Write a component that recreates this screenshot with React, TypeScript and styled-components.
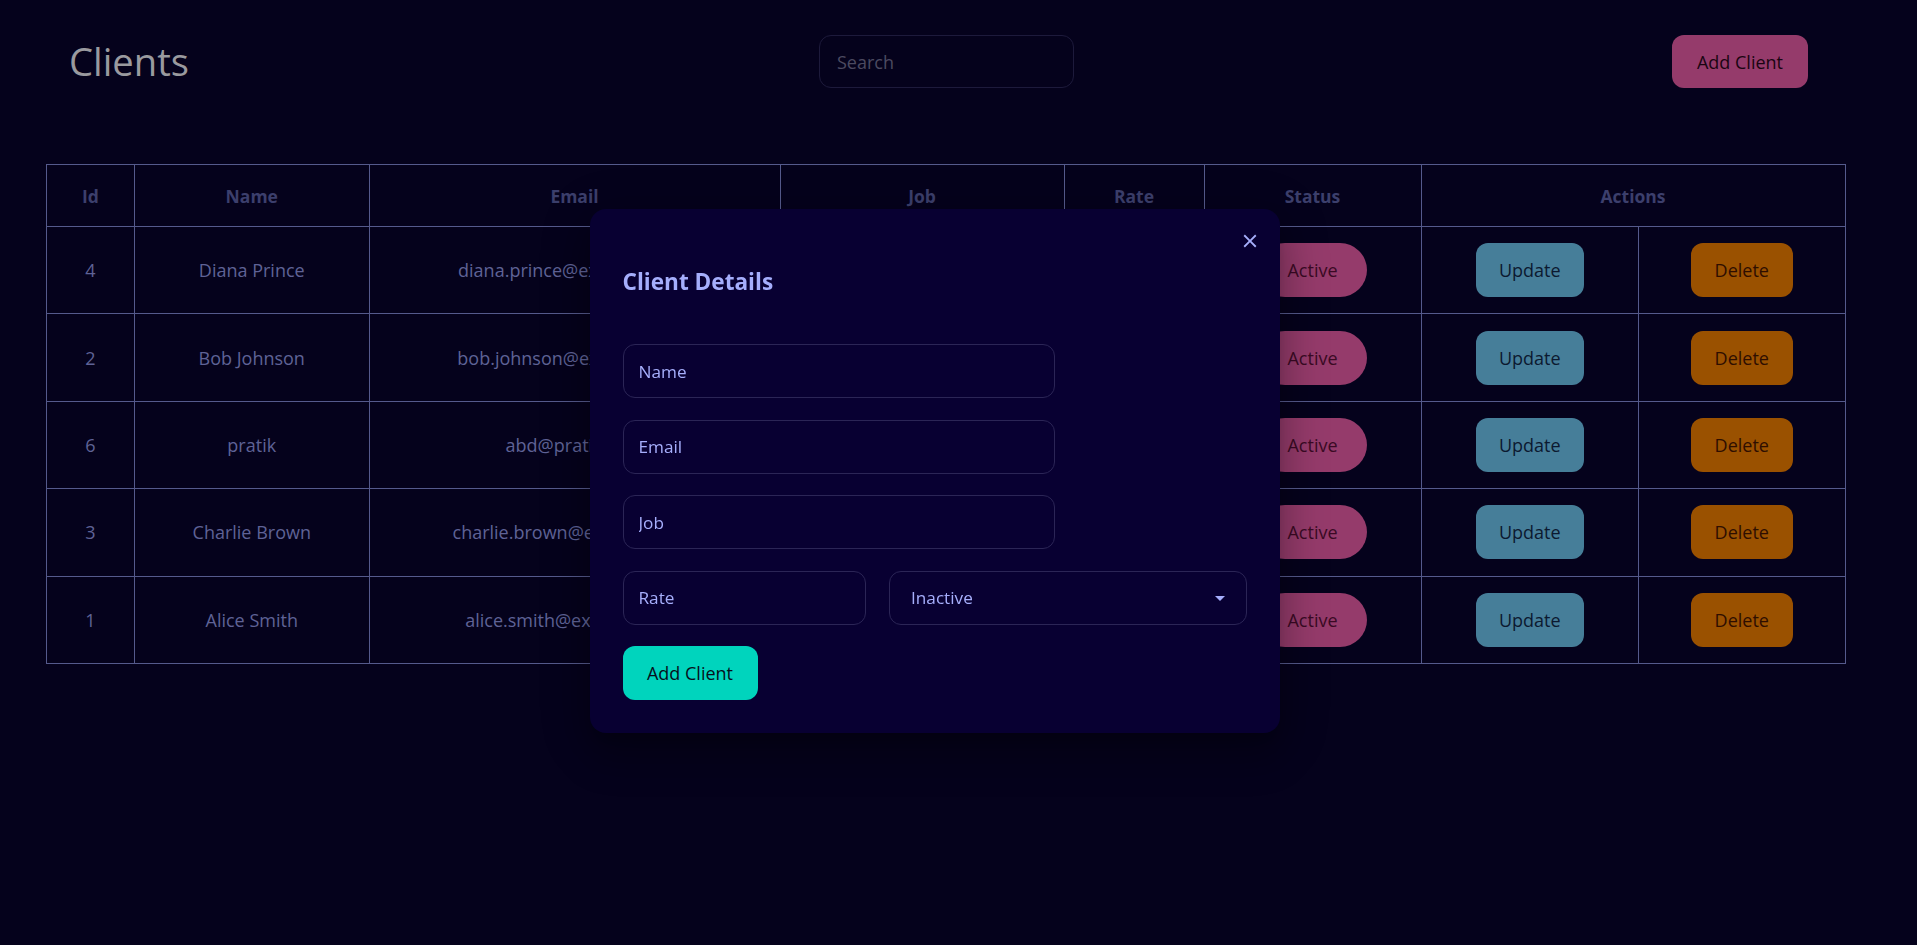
import React from "react";
import styled, { createGlobalStyle, css } from "styled-components";

const GlobalStyle = createGlobalStyle`
  html, body {
    margin: 0;
    padding: 0;
    background: #05021c;
  }
  body {
    font-family: "Open Sans", "Noto Sans", sans-serif;
    min-height: 100vh;
  }
  *, *::before, *::after {
    box-sizing: border-box;
  }
`;

const Page = styled.div`
  min-height: 100vh;
  background: #05021c;
`;

const Header = styled.header`
  display: grid;
  grid-template-columns: 750px 255px 1fr;
  align-items: center;
  padding: 35px 109px 0 69px;
`;

const Title = styled.h1`
  margin: 0;
  font-size: 38.2px;
  font-weight: 500;
  color: #9a9a9f;
  line-height: 53px;
`;

const Search = styled.input`
  height: 53px;
  width: 255px;
  border: 1px solid #1d1a3b;
  border-radius: 12px;
  background: transparent;
  padding: 0 17px;
  font-family: "Open Sans", sans-serif;
  font-size: 18px;
  color: #c0c0d0;
  outline: none;
  &::placeholder {
    color: #4c4a60;
  }
`;

const HeaderButton = styled.button`
  justify-self: end;
  width: 136px;
  height: 53px;
  border: none;
  border-radius: 12px;
  background: #953b6b;
  color: #1a0512;
  font-family: "Open Sans", sans-serif;
  font-size: 18px;
  cursor: pointer;
`;

const TableWrap = styled.div`
  padding: 76px 0 0 46px;
`;

const Table = styled.table`
  width: 1799px;
  border-collapse: collapse;
  table-layout: fixed;
`;

const Th = styled.th`
  height: 62px;
  border: 1px solid #555a8c;
  color: #3c3f6c;
  font-weight: 700;
  font-size: 17.5px;
  text-align: center;
  vertical-align: middle;
  padding: 0;
`;

const Td = styled.td`
  height: 87.4px;
  border: 1px solid #555a8c;
  color: #5f6296;
  font-size: 18px;
  text-align: center;
  vertical-align: middle;
  padding: 0;
`;

type Kind = "active" | "update" | "delete";

const kinds: Record<Kind, { bg: string; fg: string; w: number; r: number }> = {
  active: { bg: "#953b6b", fg: "#3a0a24", w: 109, r: 27 },
  update: { bg: "#467e99", fg: "#0c1930", w: 108, r: 12 },
  delete: { bg: "#9a5100", fg: "#2e0e00", w: 102, r: 12 },
};

const CellButton = styled.button<{ $kind: Kind }>`
  display: block;
  margin: 0 auto;
  height: 54px;
  border: none;
  font-family: "Open Sans", sans-serif;
  font-size: 18px;
  cursor: pointer;
  ${({ $kind }) => css`
    width: ${kinds[$kind].w}px;
    background: ${kinds[$kind].bg};
    color: ${kinds[$kind].fg};
    border-radius: ${kinds[$kind].r}px;
  `}
`;

const Backdrop = styled.div`
  position: fixed;
  inset: 0;
  display: flex;
  align-items: center;
  justify-content: center;
`;

const Dialog = styled.div`
  position: relative;
  width: 690px;
  margin: 0 48px 3px 0;
  padding: 33px;
  background: #080032;
  border-radius: 16px;
  box-shadow: 0 11px 15px -7px rgba(0, 0, 0, 0.25),
    0 24px 38px 3px rgba(0, 0, 0, 0.18), 0 9px 46px 8px rgba(0, 0, 0, 0.15);
`;

const CloseButton = styled.button`
  position: absolute;
  top: 12px;
  right: 10px;
  width: 40px;
  height: 40px;
  display: flex;
  align-items: center;
  justify-content: center;
  padding: 0;
  border: none;
  background: transparent;
  color: #a6aefc;
  cursor: pointer;
`;

const DialogTitle = styled.h2`
  margin: 24px 0 47px;
  font-size: 22.6px;
  line-height: 31px;
  font-weight: 700;
  color: #a5aefc;
`;

const Form = styled.div`
  display: flex;
  flex-direction: column;
  align-items: flex-start;
  gap: 21.5px;
`;

const fieldBase = css`
  height: 54px;
  border: 1px solid #2b2556;
  border-radius: 12px;
  background: transparent;
  color: #a6aefc;
  font-family: "Open Sans", sans-serif;
  font-size: 17.2px;
`;

const Field = styled.input<{ $w: number }>`
  ${fieldBase};
  width: ${({ $w }) => $w}px;
  padding: 0 15px;
  outline: none;
  &::placeholder {
    color: #a6aefc;
  }
`;

const FieldRow = styled.div`
  display: flex;
  gap: 23.5px;
  width: 100%;
`;

const SelectBox = styled.div`
  ${fieldBase};
  flex: 1;
  display: flex;
  align-items: center;
  justify-content: space-between;
  padding: 0 14px 0 21px;
  cursor: pointer;
`;

const SubmitButton = styled.button`
  width: 135px;
  height: 54px;
  border: none;
  border-radius: 12px;
  background: #00d4bd;
  color: #07101c;
  font-family: "Open Sans", sans-serif;
  font-size: 18px;
  cursor: pointer;
`;

const clients = [
  { id: 4, name: "Diana Prince", email: "diana.prince@example.com", job: "Designer", rate: 90 },
  { id: 2, name: "Bob Johnson", email: "bob.johnson@example.com", job: "Developer", rate: 100 },
  { id: 6, name: "pratik", email: "abd@pratik.com", job: "Engineer", rate: 50 },
  { id: 3, name: "Charlie Brown", email: "charlie.brown@example.com", job: "Manager", rate: 80 },
  { id: 1, name: "Alice Smith", email: "alice.smith@example.com", job: "Analyst", rate: 70 },
];

const colWidths = [88, 234.5, 411, 284, 140, 217, 217.5, 206.5];

export default function App() {
  return (
    <Page>
      <GlobalStyle />
      <Header>
        <Title>Clients</Title>
        <Search placeholder="Search" />
        <HeaderButton>Add Client</HeaderButton>
      </Header>
      <TableWrap>
        <Table>
          <colgroup>
            {colWidths.map((w, i) => (
              <col key={i} style={{ width: w }} />
            ))}
          </colgroup>
          <thead>
            <tr>
              <Th>Id</Th>
              <Th>Name</Th>
              <Th>Email</Th>
              <Th>Job</Th>
              <Th>Rate</Th>
              <Th>Status</Th>
              <Th colSpan={2}>Actions</Th>
            </tr>
          </thead>
          <tbody>
            {clients.map((c) => (
              <tr key={c.id}>
                <Td>{c.id}</Td>
                <Td>{c.name}</Td>
                <Td>{c.email}</Td>
                <Td>{c.job}</Td>
                <Td>{c.rate}</Td>
                <Td>
                  <CellButton $kind="active">Active</CellButton>
                </Td>
                <Td>
                  <CellButton $kind="update">Update</CellButton>
                </Td>
                <Td>
                  <CellButton $kind="delete">Delete</CellButton>
                </Td>
              </tr>
            ))}
          </tbody>
        </Table>
      </TableWrap>

      <Backdrop>
        <Dialog>
          <CloseButton aria-label="close">
            <svg width="22" height="22" viewBox="0 0 24 24" fill="currentColor">
              <path d="M19 6.41 17.59 5 12 10.59 6.41 5 5 6.41 10.59 12 5 17.59 6.41 19 12 13.41 17.59 19 19 17.59 13.41 12z" />
            </svg>
          </CloseButton>
          <DialogTitle>Client Details</DialogTitle>
          <Form>
            <Field $w={432} placeholder="Name" />
            <Field $w={432} placeholder="Email" />
            <Field $w={432} placeholder="Job" />
            <FieldRow>
              <Field $w={243} placeholder="Rate" />
              <SelectBox>
                <span>Inactive</span>
                <svg width="24" height="24" viewBox="0 0 24 24" fill="currentColor">
                  <path d="M7 10l5 5 5-5z" />
                </svg>
              </SelectBox>
            </FieldRow>
            <SubmitButton>Add Client</SubmitButton>
          </Form>
        </Dialog>
      </Backdrop>
    </Page>
  );
}
